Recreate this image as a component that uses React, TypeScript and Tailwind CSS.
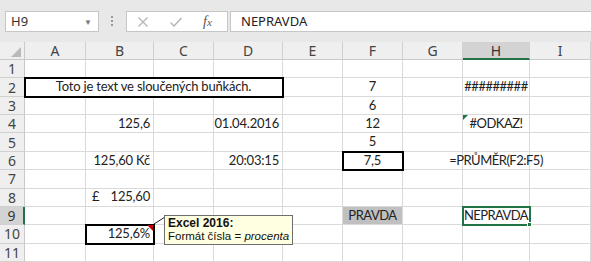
import React from "react";

const COLS = ["A", "B", "C", "D", "E", "F", "G", "H", "I"];

type Cell = {
  text?: React.ReactNode;
  align?: "left" | "right" | "center";
  box?: boolean;
  tight?: boolean;
};

const data: Record<string, Cell> = {
  B4: { text: "125,6", align: "right" },
  D4: { text: "01.04.2016", align: "right" },
  B6: { text: "125,60 Kč", align: "right" },
  D6: { text: "20:03:15", align: "right" },
  F2: { text: "7", align: "center" },
  F3: { text: "6", align: "center" },
  F4: { text: "12", align: "center" },
  F5: { text: "5", align: "center" },
  F6: { text: "7,5", align: "center", box: true },
  H2: { text: "#########", align: "center", tight: true },
  H4: { text: "#ODKAZ!", align: "center", tight: true },
  H6: { text: "=PRŮMĚR(F2:F5)", align: "center", tight: true },
  B10: { text: "125,6%", align: "right", box: true },
};

function CellView({ id }: { id: string }) {
  const c = data[id];
  const alignCls =
    c?.align === "right" ? "justify-end pr-[3px]" : c?.align === "center" ? "justify-center" : "justify-start pl-[3px]";
  return (
    <div
      className={`relative flex items-center whitespace-nowrap border-r border-b border-[#dadada] ${alignCls} ${
        c?.box ? "z-10 outline-2 outline-black -outline-offset-1" : ""
      } ${c?.tight ? "tracking-[-0.5px]" : ""}`}
    >
      {id === "H4" && (
        <div className="absolute left-0 top-0 h-0 w-0 border-t-[5px] border-r-[5px] border-t-[#217346] border-r-transparent" />
      )}
      {id === "B10" && (
        <div className="absolute right-0 top-0 h-0 w-0 border-t-[6px] border-l-[6px] border-t-[#c00000] border-l-transparent" />
      )}
      {c?.text}
    </div>
  );
}

export default function App() {
  const rows = Array.from({ length: 11 }, (_, i) => i + 1);
  return (
    <div
      className="relative h-[262px] w-[591px] overflow-hidden bg-white text-[#222]"
      style={{ fontFamily: "Lato, 'Noto Sans', sans-serif" }}
    >
      {/* Formula bar */}
      <div
        className="flex h-[42px] items-start bg-[#e8e8e8] pt-[11px]"
        style={{ fontFamily: "'Noto Sans', sans-serif" }}
      >
        <div className="ml-[5px] flex h-[21px] w-[94px] items-center justify-between border border-[#c6c6c6] bg-white pl-[5px] pr-[6px] text-[13px] text-[#333]">
          <span>H9</span>
          <span className="text-[8px] text-[#777]">▼</span>
        </div>
        <div className="ml-[12px] mt-[5px] flex flex-col gap-[2px]">
          <div className="h-[2px] w-[2px] bg-[#9a9a9a]" />
          <div className="h-[2px] w-[2px] bg-[#9a9a9a]" />
          <div className="h-[2px] w-[2px] bg-[#9a9a9a]" />
        </div>
        <div className="ml-[13px] flex h-[21px] w-[102px] items-center border border-[#c6c6c6] bg-white">
          <svg width="12" height="12" viewBox="0 0 12 12" className="ml-[10px]">
            <path d="M1.5 1.5 L10.5 10.5 M10.5 1.5 L1.5 10.5" stroke="#b4b4b4" strokeWidth="1.3" fill="none" />
          </svg>
          <svg width="14" height="12" viewBox="0 0 14 12" className="ml-[20px]">
            <path d="M1.5 6.5 L5 10 L12.5 2" stroke="#b4b4b4" strokeWidth="1.3" fill="none" />
          </svg>
          <span
            className="ml-[20px] text-[14px] italic text-[#555]"
            style={{ fontFamily: "'Liberation Serif', serif" }}
          >
            f<span className="text-[11px]">x</span>
          </span>
        </div>
        <div className="ml-[2px] flex h-[21px] flex-1 items-center border border-r-0 border-[#c6c6c6] bg-white pl-[10px] text-[13px] text-[#222]">
          NEPRAVDA
        </div>
      </div>

      {/* Sheet grid */}
      <div className="relative grid grid-cols-[25px_61px_68px_60px_69px_60px_60px_60px_67px_61px] grid-rows-[18px_repeat(11,18.36px)] text-[13px] tracking-[-0.2px]">
        {/* corner */}
        <div className="relative border-r border-b border-[#c9c9c9] bg-[#efefef]">
          <div className="absolute bottom-[2px] right-[3px] h-0 w-0 border-b-[10px] border-l-[10px] border-b-[#b9b9b9] border-l-transparent" />
        </div>
        {COLS.map((c) => (
          <div
            key={c}
            className={`flex items-center justify-center border-r border-[#d0d0d0] text-[14px] tracking-normal ${
              c === "H"
                ? "border-b-2 border-b-[#217346] bg-[#d3d3d3] text-[#333]"
                : "border-b border-b-[#c9c9c9] bg-[#efefef] text-[#444]"
            }`}
            style={{ fontFamily: "'Noto Sans', sans-serif" }}
          >
            {c}
          </div>
        ))}
        {rows.map((r) => (
          <React.Fragment key={r}>
            <div
              className={`flex items-center justify-center border-b border-[#d0d0d0] text-[14px] tracking-normal ${
                r === 9
                  ? "border-r-2 border-r-[#217346] bg-[#d3d3d3] text-[#333]"
                  : "border-r border-r-[#c9c9c9] bg-[#efefef] text-[#444]"
              }`}
              style={{ fontFamily: "'Noto Sans', sans-serif" }}
            >
              {r}
            </div>
            {r === 2 ? (
              <>
                <div className="relative z-10 col-span-4 flex items-center justify-center border-r border-b border-[#dadada] outline-2 outline-black -outline-offset-1">
                  Toto je text ve sloučených buňkách.
                </div>
                {COLS.slice(4).map((c) => (
                  <CellView key={c} id={`${c}${r}`} />
                ))}
              </>
            ) : r === 8 ? (
              <>
                <CellView id="A8" />
                <div className="flex items-center justify-between border-r border-b border-[#dadada] pl-[6px] pr-[3px]">
                  <span>£</span>
                  <span>125,60</span>
                </div>
                {COLS.slice(2).map((c) => (
                  <CellView key={c} id={`${c}${r}`} />
                ))}
              </>
            ) : r === 9 ? (
              <>
                {COLS.slice(0, 5).map((c) => (
                  <CellView key={c} id={`${c}${r}`} />
                ))}
                <div className="flex items-center justify-center border-r border-b border-[#dadada] bg-[#c0c0c0] tracking-[-0.5px]">
                  PRAVDA
                </div>
                <CellView id="G9" />
                <div className="relative z-10 flex items-center justify-center border-r border-b border-[#dadada] tracking-[-0.6px] outline-2 outline-[#217346] -outline-offset-1">
                  NEPRAVDA
                  <div className="absolute -bottom-[3px] -right-[3px] h-[5px] w-[5px] border border-white bg-[#217346]" />
                </div>
                <CellView id="I9" />
              </>
            ) : (
              COLS.map((c) => <CellView key={c} id={`${c}${r}`} />)
            )}
          </React.Fragment>
        ))}

        {/* Comment callout */}
        <svg className="pointer-events-none absolute left-[150px] top-[172px] z-20" width="20" height="14">
          <line x1="4" y1="10" x2="15" y2="3" stroke="#222" strokeWidth="1" />
        </svg>
        <div
          className="absolute left-[164px] top-[173px] z-20 flex h-[30px] w-[129px] flex-col justify-center whitespace-nowrap border border-[#6e6e6e] bg-[#ffffe1] pl-[3px] text-[11.5px] leading-[13px] tracking-normal text-[#111]"
          style={{ fontFamily: "'Liberation Sans', sans-serif" }}
        >
          <span className="text-[12px] font-bold">Excel 2016:</span>
          <span>
            Formát čísla = <i>procenta</i>
          </span>
        </div>
      </div>
    </div>
  );
}
